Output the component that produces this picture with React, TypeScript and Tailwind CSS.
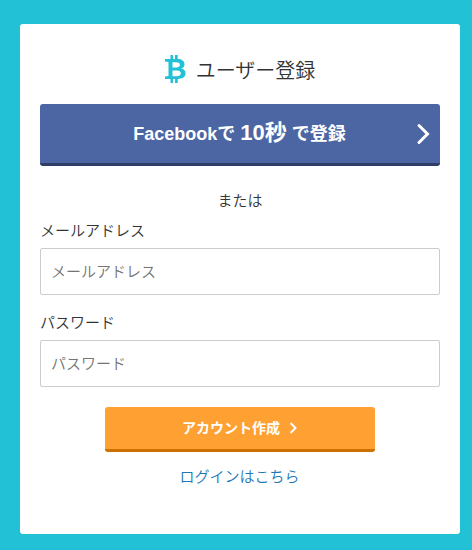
import React from 'react';

const BitcoinIcon: React.FC = () => (
    <svg className="mr-[10px] h-[28px] w-[21px]" viewBox="0 0 21 28" fill="#22c1d6">
        <path d="M5.500 0h2.500v5H5.500zM10 0h2.700v5h-2.700zM5.500 23h2.500v5H5.500zM10 23h2.700v5h-2.700z" />
        <path fillRule="evenodd" d="M0 4h12c5 0 7.500 2 7.500 5.300c0 2.500-1.500 4-3.500 4.200c3 .5 4.500 2.300 4.500 4.800c0 4-3 5.700-8 5.700H0v-2.500l3.500-.5V7L0 6.500zM7.500 7.300v5.200h3.700c2.300 0 3.700-.8 3.700-2.700c0-1.700-1.400-2.500-3.700-2.500zM7.500 15.500v5.700h4.300c2.500 0 4-1 4-2.900s-1.500-2.800-4-2.800z" />
    </svg>
);

const App: React.FC = () => {
    return (
        <div className="min-h-screen bg-[#22c1d6] pt-6 pr-3 pb-4 pl-5 font-['Liberation_Sans','Noto_Sans_CJK_JP',sans-serif] text-[15px] text-[#333]">
            {/* Registration card */}
            <div className="flex h-[510px] flex-col rounded-[3px] bg-white px-5 pt-[31px]">
                <h1 className="flex h-[28px] items-center justify-center text-[20px] font-[350]">
                    <BitcoinIcon />
                    <span className="pt-[4px]">ユーザー登録</span>
                </h1>

                {/* Facebook sign up */}
                <button className="mt-[21px] flex h-[62px] items-center rounded-[3px] border-b-[3px] border-[#2e3e66] bg-[#4c66a4] pr-[10px] text-[18px] font-bold text-white">
                    <span className="flex-1 pl-[23px] text-center leading-[30px] whitespace-nowrap">
                        Facebookで <span className="text-[22px]">10秒</span> で登録
                    </span>
                    <svg className="h-[22px] w-[14px]" viewBox="0 0 14 22" fill="none" stroke="currentColor" strokeWidth="3" strokeLinecap="round">
                        <path d="M3 2.500l8.500 8.500l-8.500 8.500" />
                    </svg>
                </button>

                <p className="mt-6 text-center leading-[22px] font-[350]">または</p>

                {/* Sign up form */}
                <form className="flex flex-col">
                    <label htmlFor="email" className="mt-2 leading-[22px] font-[350]">メールアドレス</label>
                    <input id="email" type="email" placeholder="メールアドレス" className="mt-[6px] h-[47px] rounded-[2px] border border-[#ccc] px-[10px] font-[350] placeholder:text-[#757575]" />
                    <label htmlFor="password" className="mt-[17px] leading-[22px] font-[350]">パスワード</label>
                    <input id="password" type="password" placeholder="パスワード" className="mt-[6px] h-[47px] rounded-[2px] border border-[#ccc] px-[10px] font-[350] placeholder:text-[#757575]" />
                    <button type="submit" className="mt-5 flex h-[45px] w-[270px] items-center justify-center self-center rounded-[3px] border-b-[3px] border-[#cc7000] bg-[#ffa033] text-[14px] font-bold text-white">
                        アカウント作成
                        <svg className="ml-[9px] h-[12px] w-[9px]" viewBox="0 0 9 12" fill="none" stroke="currentColor" strokeWidth="2">
                            <path d="M1.500 1l5 5l-5 5" />
                        </svg>
                    </button>
                </form>

                <a href="#login" className="mt-[14px] self-center pr-[1px] leading-[22px] font-[350] text-[#1f77b8]">ログインはこちら</a>
            </div>
        </div>
    );
};

export default App;
